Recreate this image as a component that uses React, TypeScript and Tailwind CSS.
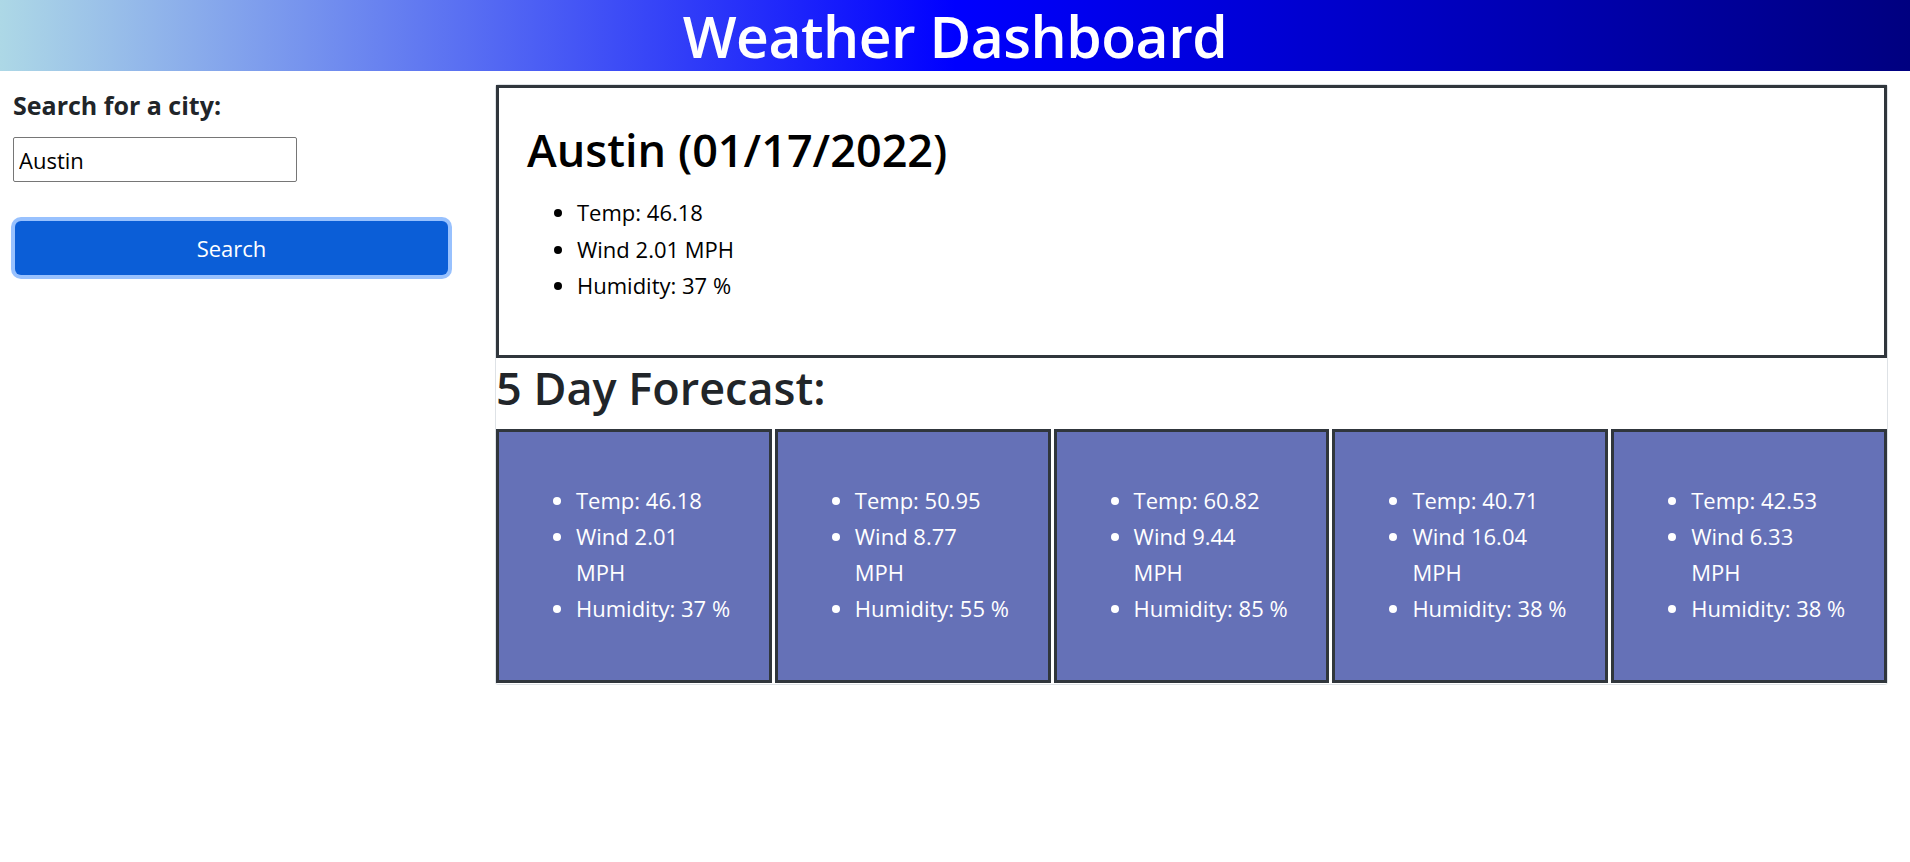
const current = {
  city: "Austin",
  date: "01/17/2022",
  temp: "46.18",
  wind: "2.01",
  humidity: 37,
};

const forecast = [
  { temp: "46.18", wind: "2.01", humidity: 37 },
  { temp: "50.95", wind: "8.77", humidity: 55 },
  { temp: "60.82", wind: "9.44", humidity: 85 },
  { temp: "40.71", wind: "16.04", humidity: 38 },
  { temp: "42.53", wind: "6.33", humidity: 38 },
];

function ForecastCard({ day }: { day: { temp: string; wind: string; humidity: number } }) {
  return (
    <div className="flex-1 h-[254px] border-[3px] border-[#30363c] bg-[#6571b7] text-white flex items-center">
      <ul className="list-disc pl-[77px] pb-[4px] text-[22px] leading-[36px]">
        <li>Temp: {day.temp}</li>
        <li>
          Wind {day.wind}
          <span className="block">MPH</span>
        </li>
        <li>Humidity: {day.humidity} %</li>
      </ul>
    </div>
  );
}

export default function App() {
  return (
    <div className="min-h-screen bg-white text-[#212529] font-['Open_Sans',sans-serif]">
      <header className="h-[71px] flex items-center justify-center bg-[linear-gradient(to_right,#add8e6,#0000ff_50%,#000080)]">
        <h1 className="text-white font-semibold text-[57px] leading-none tracking-[-0.5px] mt-[2px]">Weather Dashboard</h1>
      </header>

      <div className="flex">
        {/* search column */}
        <aside className="w-[495px] shrink-0 pl-[13px] pt-[18px]">
          <h5 className="text-[25px] font-bold leading-[32px]">Search for a city:</h5>
          <input
            className="mt-[16px] block w-[284px] h-[45px] border border-[#767676] rounded-[2px] px-[5px] text-[22px] text-black outline-none"
            defaultValue="Austin"
          />
          <button className="mt-[39px] ml-[2px] w-[433px] h-[54px] rounded-[6px] bg-[#0b5ed7] text-white text-[22px] ring-4 ring-[#98c1fe]">
            Search
          </button>
        </aside>

        {/* weather column */}
        <main className="w-[1393px] mt-[13px] border border-[#dee2e6] rounded-[3px]">
          <section className="h-[273px] border-[3px] border-[#30363c] pl-[28px] pt-[34px]">
            <h1 className="text-[45px] font-semibold leading-[55px] text-black">
              {current.city} ({current.date})
            </h1>
            <ul className="mt-[17px] list-disc pl-[50px] text-[22px] leading-[36.5px] text-black">
              <li>Temp: {current.temp}</li>
              <li>Wind {current.wind} MPH</li>
              <li>Humidity: {current.humidity} %</li>
            </ul>
          </section>

          <h2 className="text-[45px] font-semibold leading-[55px] mt-[2px] mb-[14px]">5 Day Forecast:</h2>

          <div className="flex gap-[3px] pb-[1px]">
            {forecast.map((day, i) => (
              <ForecastCard key={i} day={day} />
            ))}
          </div>
        </main>
      </div>
    </div>
  );
}
